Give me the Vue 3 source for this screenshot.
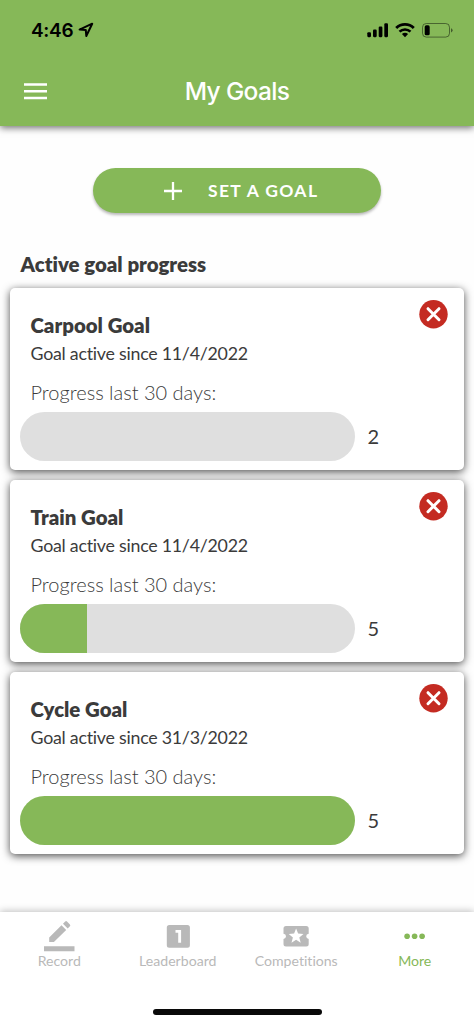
<script setup>
const goals = [
  { name: 'Carpool Goal', since: '11/4/2022', target: 2, percent: 0 },
  { name: 'Train Goal', since: '11/4/2022', target: 5, percent: 20 },
  { name: 'Cycle Goal', since: '31/3/2022', target: 5, percent: 100 },
]
</script>

<template>
  <div class="screen">
    <header class="header">
      <div class="status">
        <span class="time">4:46</span>
        <svg class="location" width="16" height="16" viewBox="0 0 16 16">
          <path d="M1.6 7.6 14.2 1.7 8.3 14 7.8 8.1Z" fill="none" stroke="#000" stroke-width="2" stroke-linejoin="round" />
        </svg>
        <svg class="signal" width="22" height="15" viewBox="0 0 22 15">
          <rect x="0.3" y="9.2" width="3.7" height="5" rx="1.1" />
          <rect x="6" y="6.6" width="3.7" height="7.6" rx="1.1" />
          <rect x="11.7" y="3.6" width="3.7" height="10.6" rx="1.1" />
          <rect x="17.3" y="0.3" width="3.7" height="13.9" rx="1.1" />
        </svg>
        <svg class="wifi" width="20" height="15" viewBox="0 0 20 15">
          <path d="M1.2 5.1A12.4 12.4 0 0 1 18.8 5.1" fill="none" stroke="#000" stroke-width="2.8" />
          <path d="M4.5 8.7A7.8 7.8 0 0 1 15.5 8.7" fill="none" stroke="#000" stroke-width="2.6" />
          <path d="M6.9 11.1A4.5 4.5 0 0 1 13.1 11.1L10 14.2Z" />
        </svg>
        <svg class="battery" width="31" height="15" viewBox="0 0 31 15">
          <rect x="0.5" y="0.5" width="27" height="13.6" rx="3.8" fill="none" stroke="#000" stroke-opacity="0.45" />
          <rect x="2.7" y="2.3" width="5" height="10" rx="1.6" />
          <path d="M29 5.2Q30.6 5.8 30.6 7.3T29 9.4Z" fill-opacity="0.5" />
        </svg>
      </div>
      <div class="toolbar">
        <svg class="menu" width="23" height="17" viewBox="0 0 23 17">
          <path d="M0 1.4H23M0 8.2H23M0 15.1H23" stroke="#fff" stroke-width="2.5" />
        </svg>
        <h1>My Goals</h1>
      </div>
    </header>

    <main>
      <button class="set-goal">
        <svg width="18" height="18" viewBox="0 0 18 18">
          <path d="M9 0V18M0 9H18" stroke="#fff" stroke-width="2.3" />
        </svg>
        <span>SET A GOAL</span>
      </button>

      <h2>Active goal progress</h2>

      <section class="goals">
        <article v-for="goal in goals" :key="goal.name" class="card">
          <div class="card-head">
            <div>
              <h3>{{ goal.name }}</h3>
              <p class="since">Goal active since {{ goal.since }}</p>
            </div>
            <svg class="remove" width="29" height="29" viewBox="0 0 29 29">
              <circle cx="14.5" cy="14.2" r="14.2" fill="#c42b22" />
              <path d="M9 8.7 20 19.7M20 8.7 9 19.7" stroke="#fff" stroke-width="3" stroke-linecap="round" />
            </svg>
          </div>
          <p class="caption">Progress last 30 days:</p>
          <div class="progress">
            <div class="track">
              <div class="fill" :style="{ width: goal.percent + '%' }"></div>
            </div>
            <span class="target">{{ goal.target }}</span>
          </div>
        </article>
      </section>
    </main>

    <nav class="tabs">
      <div class="tab">
        <svg width="32" height="32" viewBox="0 0 32 32">
          <path d="M6.2 17.4 18.5 5.2 23.2 9.9 10.9 22H6.2ZM20 3.7 22.2 1.5Q23.1.6 24 1.5L26.9 4.4Q27.8 5.3 26.9 6.2L24.7 8.4ZM1 26.2H31.5V31.2H1Z" />
        </svg>
        <span>Record</span>
      </div>
      <div class="tab">
        <svg width="32" height="32" viewBox="0 0 32 32">
          <path fill-rule="evenodd" d="M7.3 5H25.4Q27.9 5 27.9 7.5V25.2Q27.9 27.7 25.4 27.7H7.3Q4.8 27.7 4.8 25.2V7.5Q4.8 5 7.3 5ZM13.5 10V12.7H16.2V22.8H19.1V10Z" />
        </svg>
        <span>Leaderboard</span>
      </div>
      <div class="tab">
        <svg width="32" height="32" viewBox="0 0 32 32">
          <path fill-rule="evenodd" d="M6 6H26.2Q28.7 6 28.7 8.5V13.7Q26.2 14 26.2 16.3T28.7 18.9V24Q28.7 26.5 26.2 26.5H6Q3.5 26.5 3.5 24V18.9Q6 18.6 6 16.3T3.5 13.7V8.5Q3.5 6 6 6ZM16.1 8.5 14.1 13.6 8.7 13.9 12.9 17.4 11.5 22.7 16.1 19.8 20.7 22.7 19.3 17.4 23.5 13.9 18.1 13.6Z" />
        </svg>
        <span>Competitions</span>
      </div>
      <div class="tab active">
        <svg width="32" height="32" viewBox="0 0 32 32">
          <circle cx="8.1" cy="16.2" r="2.8" />
          <circle cx="15.6" cy="16.2" r="2.8" />
          <circle cx="23.1" cy="16.2" r="2.8" />
        </svg>
        <span>More</span>
      </div>
      <div class="home-bar"></div>
    </nav>
  </div>
</template>

<style>
body {
  background: #fff;
}
</style>

<style scoped>
.screen {
  width: 474px;
  height: 1025px;
  display: flex;
  flex-direction: column;
  overflow: hidden;
  background: #fefefe;
  color: #3b3b3b;
  font-family: Lato, sans-serif;
  font-variant-ligatures: none;
}
h1, h2, h3, p {
  margin: 0;
}
svg {
  display: block;
  flex: none;
}
.header {
  flex: none;
  height: 126px;
  background: #86b858;
  box-shadow: 0 2px 7px rgba(0, 0, 0, 0.55);
  font-family: Inter, sans-serif;
}
.status {
  height: 60px;
  display: flex;
  align-items: center;
  padding: 0 21px 0 31px;
  color: #000;
}
.time {
  width: 42px;
  font-size: 19px;
  font-weight: 600;
  letter-spacing: -0.3px;
  white-space: nowrap;
}
.location {
  margin: 0 auto 0 5px;
}
.wifi {
  margin: 0 7px 0 6px;
}
.toolbar {
  height: 62px;
  display: grid;
  grid-template-columns: 1fr auto 1fr;
  align-items: center;
  padding: 0 24px;
}
h1 {
  color: #fff;
  font-size: 24.5px;
  font-weight: 500;
  line-height: 30px;
  letter-spacing: -0.65px;
}
main {
  flex: 1;
  padding: 42px 10px 0;
}
.set-goal {
  width: 288px;
  height: 45px;
  margin: 0 auto;
  padding: 0 0 0 71px;
  display: flex;
  align-items: center;
  gap: 26px;
  border: 0;
  border-radius: 23px;
  background: #86b858;
  box-shadow: 0 2px 3px rgba(0, 0, 0, 0.28);
  color: #fff;
  font: 700 17.5px Lato, sans-serif;
  letter-spacing: 1.35px;
}
h2 {
  margin: 38px 0 11px 10.5px;
  font-size: 20.4px;
  font-weight: 800;
  line-height: 26px;
}
.goals {
  display: flex;
  flex-direction: column;
  gap: 10px;
}
.card {
  height: 182px;
  box-sizing: border-box;
  padding: 12px 10px 0;
  border-radius: 5px;
  background: #fff;
  box-shadow: 0 2px 9px rgba(0, 0, 0, 0.7);
}
.card-head {
  display: flex;
  justify-content: space-between;
  padding: 0 6.5px 0 10.5px;
}
h3 {
  padding-top: 12px;
  font-size: 20.4px;
  font-weight: 800;
  line-height: 26px;
}
.since {
  padding-top: 3px;
  font-size: 17.8px;
  line-height: 24px;
  letter-spacing: -0.24px;
}
.caption {
  margin: 15px 0 7px 10.5px;
  font-size: 20px;
  font-weight: 300;
  line-height: 25px;
}
.progress {
  display: flex;
  align-items: center;
}
.track {
  width: 335px;
  height: 49px;
  border-radius: 25px;
  background: #dfdfdf;
  overflow: hidden;
}
.fill {
  height: 100%;
  background: #86b858;
}
.target {
  margin: -2px 0 0 12.5px;
  font-size: 20px;
}
.tabs {
  flex: none;
  height: 113px;
  display: grid;
  grid-template-columns: repeat(4, 1fr);
  grid-template-rows: 1fr auto;
  background: #fff;
  box-shadow: 0 -1px 7px rgba(0, 0, 0, 0.25);
}
.tab {
  display: flex;
  flex-direction: column;
  align-items: center;
  padding-top: 8px;
  color: #b9b9b9;
  font-size: 14.1px;
  line-height: 17px;
}
.tab svg {
  fill: #b9b9b9;
}
.active {
  color: #86b858;
}
.active svg {
  fill: #86b858;
}
.home-bar {
  grid-column: 1 / -1;
  justify-self: center;
  width: 169px;
  height: 6px;
  margin-bottom: 10px;
  border-radius: 3px;
  background: #090909;
}
</style>
